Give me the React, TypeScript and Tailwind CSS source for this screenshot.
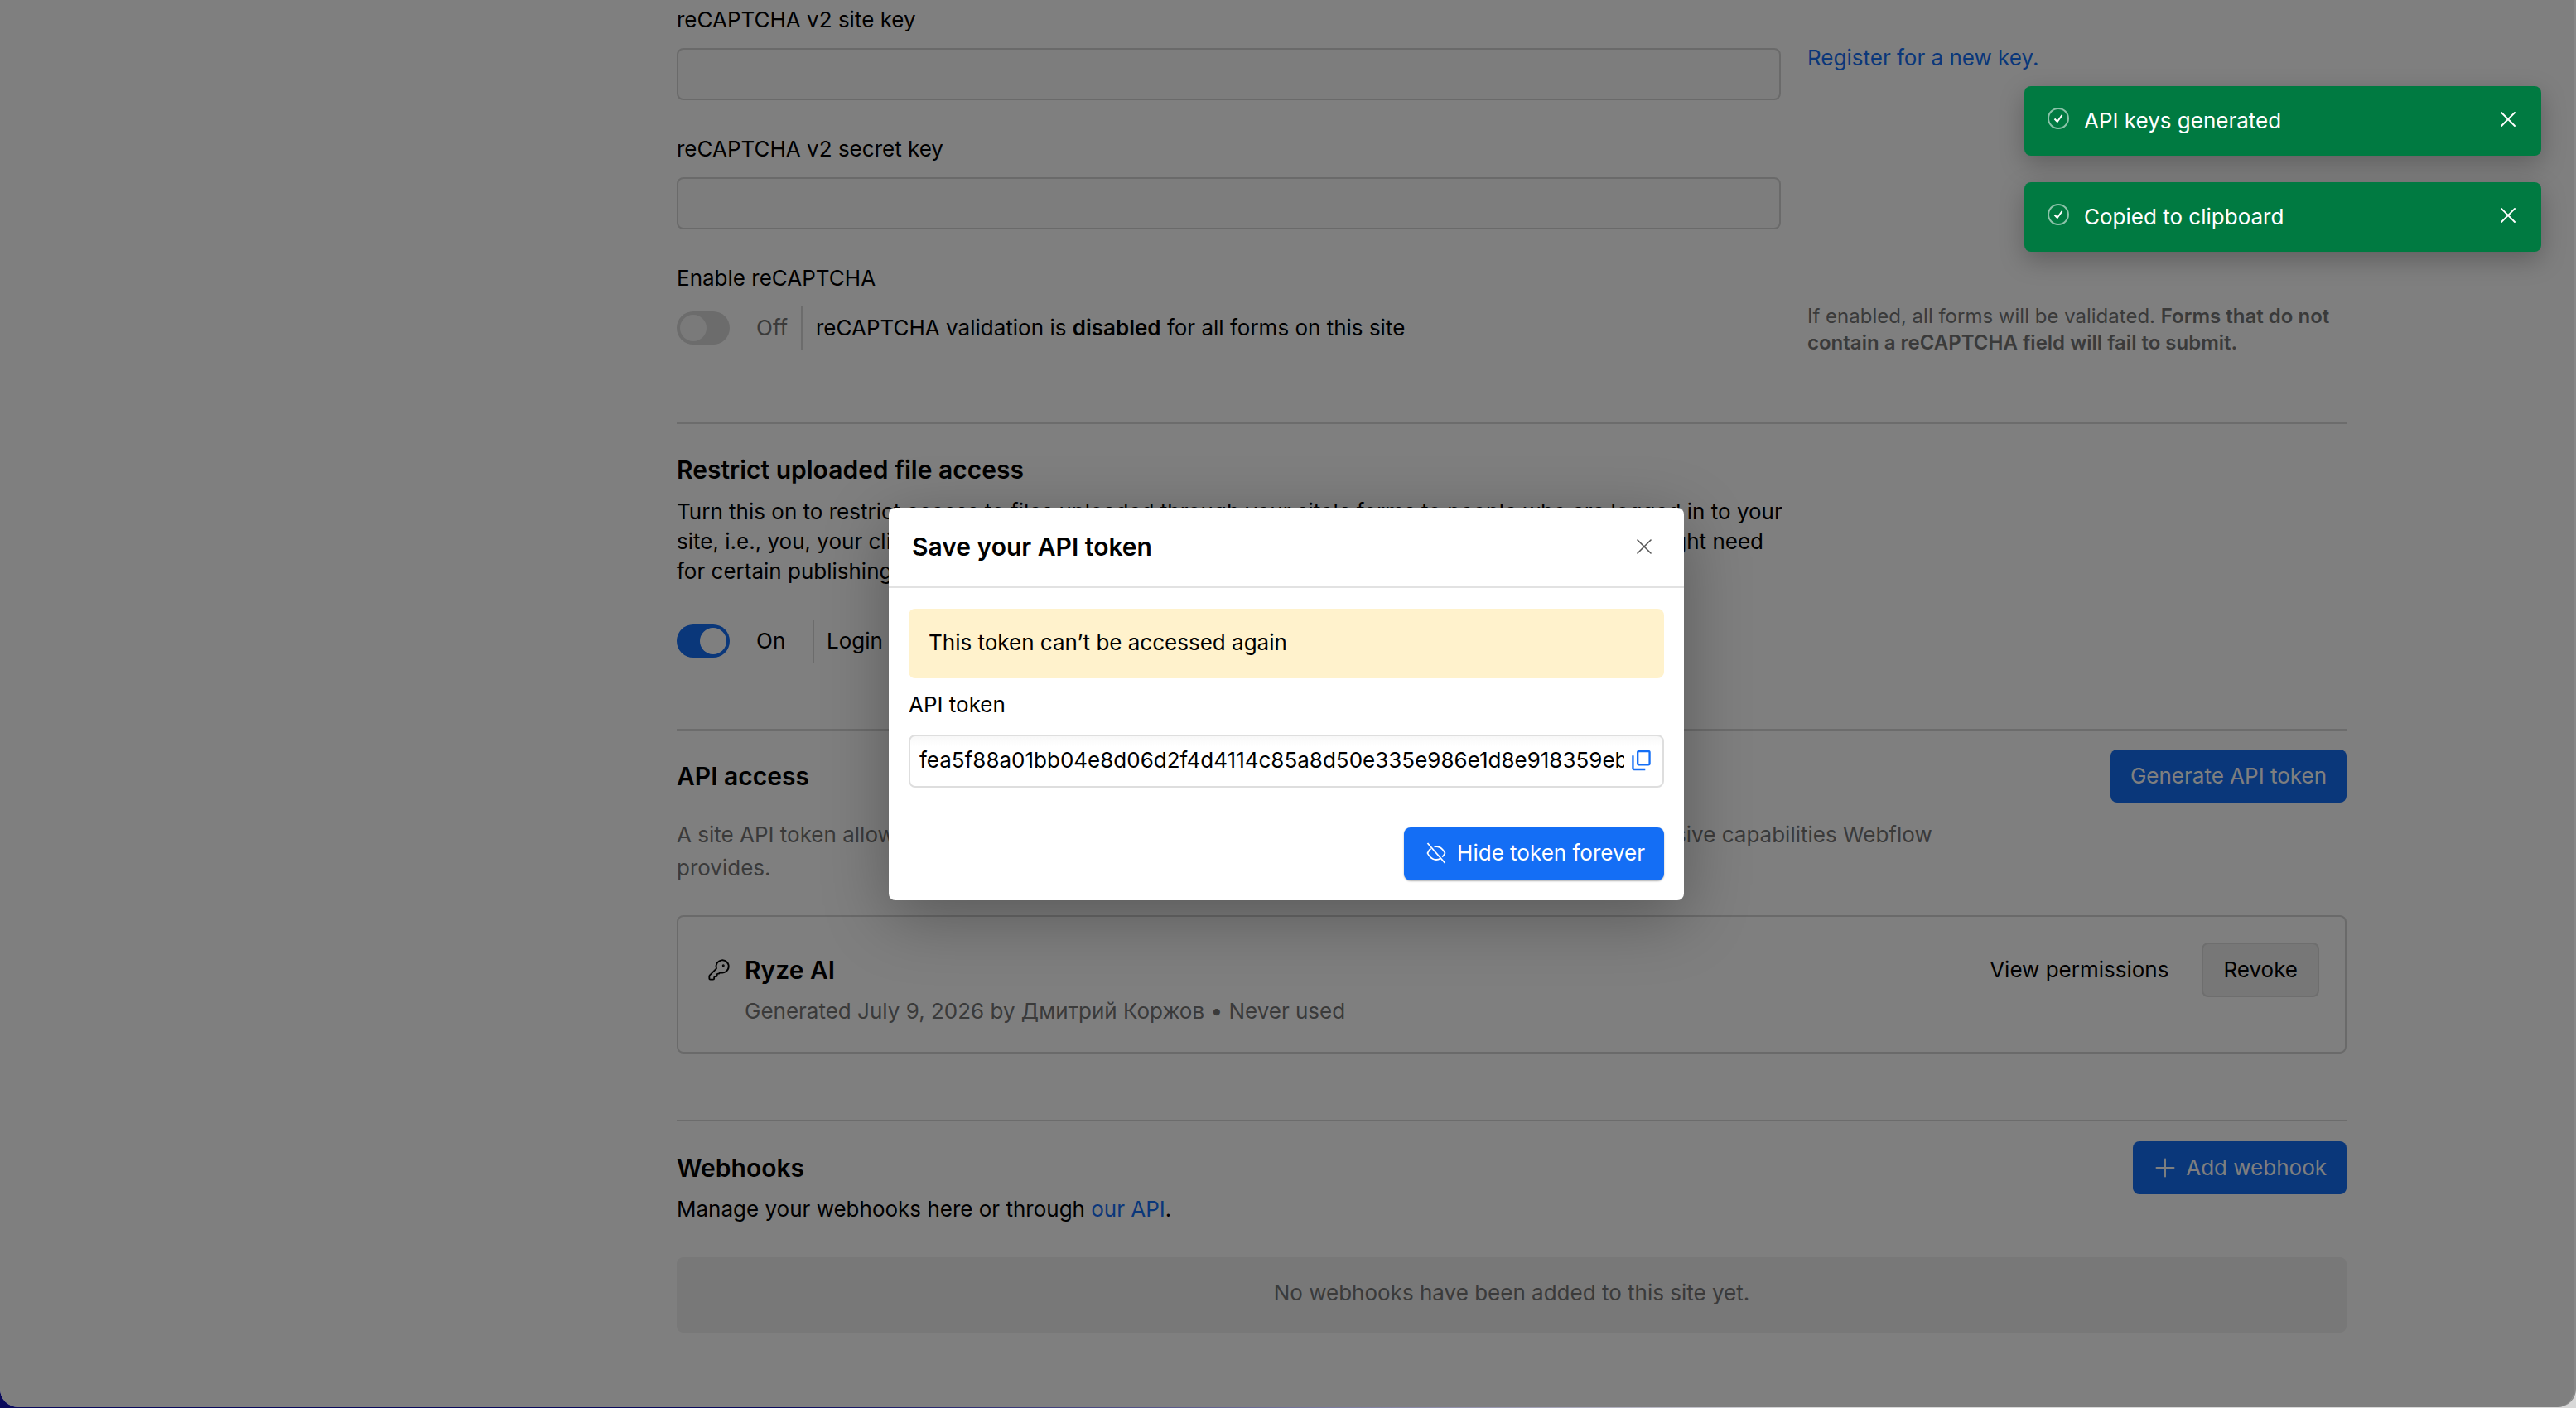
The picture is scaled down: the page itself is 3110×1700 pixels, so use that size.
import { KeyRound, Plus, X } from 'lucide-react'

const FONT = 'font-["Inter","Noto_Sans",sans-serif]'

function Toggle({ on }: { on?: boolean }) {
  return (
    <span className={on ? 'flex h-10 w-16 shrink-0 items-center justify-end rounded-full bg-[#146ef5] px-1' : 'flex h-10 w-16 shrink-0 items-center rounded-full bg-[#d8d8d8] px-1'}>
      <span className={on ? 'size-8 rounded-full bg-white' : 'size-8 rounded-full bg-[#f4f4f4]'} />
    </span>
  )
}

function ToastIcon() {
  return (
    <svg viewBox="0 0 26 26" className="size-[26px] shrink-0" fill="none">
      <circle cx="13" cy="13" r="12" stroke="white" strokeOpacity="0.55" strokeWidth="2" />
      <path d="M8.5 13.5 11.8 17 17.5 9" stroke="white" strokeWidth="2" />
    </svg>
  )
}

function Toast({ text }: { text: string }) {
  return (
    <div className="flex h-[84px] w-[624px] items-start rounded-lg bg-[#007a41] pt-[26px] pr-[24px] pl-[28px] text-[26px] leading-[34px] text-white shadow-[0_10px_30px_rgba(0,0,0,0.25)]">
      <ToastIcon />
      <span className="-mt-[1px] ml-[18px] flex-1">{text}</span>
      <X className="-mt-[2px] size-[32px]" strokeWidth={1.4} />
    </div>
  )
}

function CopyIcon() {
  return (
    <svg viewBox="0 0 24 26" className="h-[26px] w-[23px] shrink-0" fill="none" stroke="#146ef5" strokeWidth="2.4">
      <rect x="7.5" y="1.5" width="15" height="17" rx="1.5" />
      <path d="M1.500 7v16a1.500 1.500 0 0 0 1.500 1.500h14" />
    </svg>
  )
}

function HideIcon() {
  return (
    <svg viewBox="0 0 26 26" className="size-[26px] shrink-0" fill="none" stroke="white" strokeWidth="1.8">
      <path d="M6.500 7.500C4 9.500 2.500 13 2.500 13s3.500 8 10.500 8c1.900 0 3.600-.6 5.100-1.500M10.500 5.400c.8-.3 1.600-.4 2.500-.4 7 0 10.500 8 10.500 8s-1.100 2.500-3.300 4.700" />
      <path d="M2.500 1 23.500 25" />
    </svg>
  )
}

export default function App() {
  return (
    <div className={`${FONT} h-[1700px] overflow-hidden bg-[linear-gradient(90deg,#0a0a5c_0%,#0a0a5c_30%,#d8d8d8_70%,#d8d8d8_100%)] text-[26px] leading-[36px] text-black`}>
      <div className="relative h-[1699px] overflow-hidden rounded-b-[22px] border-r-2 border-[#888] bg-white">
        <div className="ml-[817px] w-[2016px]">
          <div className="grid grid-cols-[1333px_650px] gap-x-8 pt-[6px]">
            <div>
              <div>reCAPTCHA v2 site key</div>
              <div className="mt-[16px] h-[63px] rounded-lg border-2 border-[#d4d4d4] bg-[#fafafa]" />
            </div>
            <a className="pt-[46px] text-[#146ef5]">Register for a new key.</a>
            <div className="mt-[41px]">
              <div>reCAPTCHA v2 secret key</div>
              <div className="mt-[16px] h-[63px] rounded-lg border-2 border-[#d4d4d4] bg-[#fafafa]" />
            </div>
            <div />
            <div className="mt-[41px]">
              <div>Enable reCAPTCHA</div>
              <div className="mt-[16px] flex h-[52px] items-center">
                <Toggle />
                <span className="ml-[32px] w-[40px] text-[#757575]">Off</span>
                <span className="mr-[16px] ml-[14px] h-[52px] w-[2px] bg-[#d8d8d8]" />
                <span>reCAPTCHA validation is <b className="font-semibold">disabled</b> for all forms on this site</span>
              </div>
            </div>
            <div className="mt-[89px] text-[24px] leading-[32px] text-[#757575]">
              If enabled, all forms will be validated. <b className="font-semibold">Forms that do not contain a reCAPTCHA field will fail to submit.</b>
            </div>
          </div>

          <div className="mt-[80px] border-t-2 border-[#d8d8d8] pt-[37px]">
            <h2 className="text-[30px] leading-[36px] font-semibold">Restrict uploaded file access</h2>
            <p className="mt-[15px] w-[1345px]">
              Turn this on to restrict access to files uploaded through your site's forms to people who are logged in to your
              <br />
              site, i.e., you, your clients, and anyone you've shared access with. Published pages with a form might need
              <br />
              for certain publishing workflows.
            </p>
            <div className="mt-[40px] flex h-[52px] items-center">
              <Toggle on />
              <span className="ml-[32px] w-[36px]">On</span>
              <span className="mr-[15px] ml-[32px] h-[52px] w-[2px] bg-[#d8d8d8]" />
              <span>Login required for all files</span>
            </div>
          </div>

          <div className="mt-[80px] border-t-2 border-[#d8d8d8] pt-[23px]">
            <div className="flex items-start justify-between">
              <h2 className="pt-[14px] text-[30px] leading-[36px] font-semibold">API access</h2>
              <button className="h-[64px] rounded-lg bg-[#146ef5] px-6 text-white">Generate API token</button>
            </div>
            <p className="mt-[19px] w-[1530px] leading-[40px] text-[#757575]">
              A site API token allows you to build powerful custom integrations, and take advantage of the extensive capabilities Webflow provides.
            </p>
            <div className="mt-[37px] flex h-[167px] items-start justify-between rounded-lg border-2 border-[#d4d4d4] pt-[31px] pr-[31px] pl-[35px]">
              <div className="pt-[15px]">
                <div className="flex h-[36px] items-center gap-[17px]">
                  <KeyRound className="size-[28px]" strokeWidth={1.6} />
                  <span className="text-[30px] font-semibold">Ryze AI</span>
                </div>
                <div className="mt-[14px] ml-[45px] text-[#757575]">Generated July 9, 2026 by Дмитрий Коржов • Never used</div>
              </div>
              <div className="flex items-center gap-[40px]">
                <span>View permissions</span>
                <button className="h-[66px] rounded-lg border-2 border-[#dcdcdc] bg-[#eeeeee] px-6">Revoke</button>
              </div>
            </div>
          </div>

          <div className="mt-[80px] border-t-2 border-[#d8d8d8] pt-[24px]">
            <div className="flex items-start justify-between">
              <h2 className="pt-[14px] text-[30px] leading-[36px] font-semibold">Webhooks</h2>
              <button className="flex h-[64px] items-center gap-[7px] rounded-lg bg-[#146ef5] pr-6 pl-[21px] text-white">
                <Plus className="size-[36px]" strokeWidth={1.3} />
                Add webhook
              </button>
            </div>
            <p>
              Manage your webhooks here or through <a className="text-[#146ef5]">our API</a>.
            </p>
            <div className="mt-[40px] flex h-[91px] items-center justify-center rounded-lg bg-[#f0f0f0] pb-[6px] text-[#757575]">
              No webhooks have been added to this site yet.
            </div>
          </div>
        </div>

        {/* modal backdrop */}
        <div className="absolute inset-0 bg-black/50" />

        <div className="absolute top-[104px] left-[2444px] flex flex-col gap-8">
          <Toast text="API keys generated" />
          <Toast text="Copied to clipboard" />
        </div>

        <div className="absolute top-[613px] left-[1073px] h-[474px] w-[960px] rounded-lg bg-white shadow-[0_20px_80px_rgba(0,0,0,0.3)]">
          <div className="flex h-[97px] items-center justify-between border-b-[3px] border-[#e2e2e2] pr-[32px] pl-[28px]">
            <h3 className="text-[30px] font-semibold">Save your API token</h3>
            <X className="size-[32px] text-[#555]" strokeWidth={1.2} />
          </div>
          <div className="px-[24px] pt-[25px]">
            <div className="flex h-[84px] items-center rounded-lg bg-[#fff2cc] pb-[2px] pl-[24px]">This token can’t be accessed again</div>
            <div className="mt-[14px]">API token</div>
            <div className="mt-[18px] flex h-[64px] items-center gap-[9px] rounded-lg border-2 border-[#dedede] bg-gradient-to-b from-[#f8f8f8] to-white to-20% pr-[14px] pb-[2px] pl-[11px]">
              <span className="min-w-0 flex-1 overflow-hidden whitespace-nowrap">fea5f88a01bb04e8d06d2f4d4114c85a8d50e335e986e1d8e918359ebd2f07c41</span>
              <CopyIcon />
            </div>
            <div className="mt-[48px] flex justify-end">
              <button className="flex h-[64px] w-[314px] items-center justify-end gap-[12px] rounded-lg bg-[#146ef5] pr-[23px] pb-[2px] text-white shadow-[0_1px_2px_rgba(0,0,0,0.3)]">
                <HideIcon />
                Hide token forever
              </button>
            </div>
          </div>
        </div>
      </div>
    </div>
  )
}
